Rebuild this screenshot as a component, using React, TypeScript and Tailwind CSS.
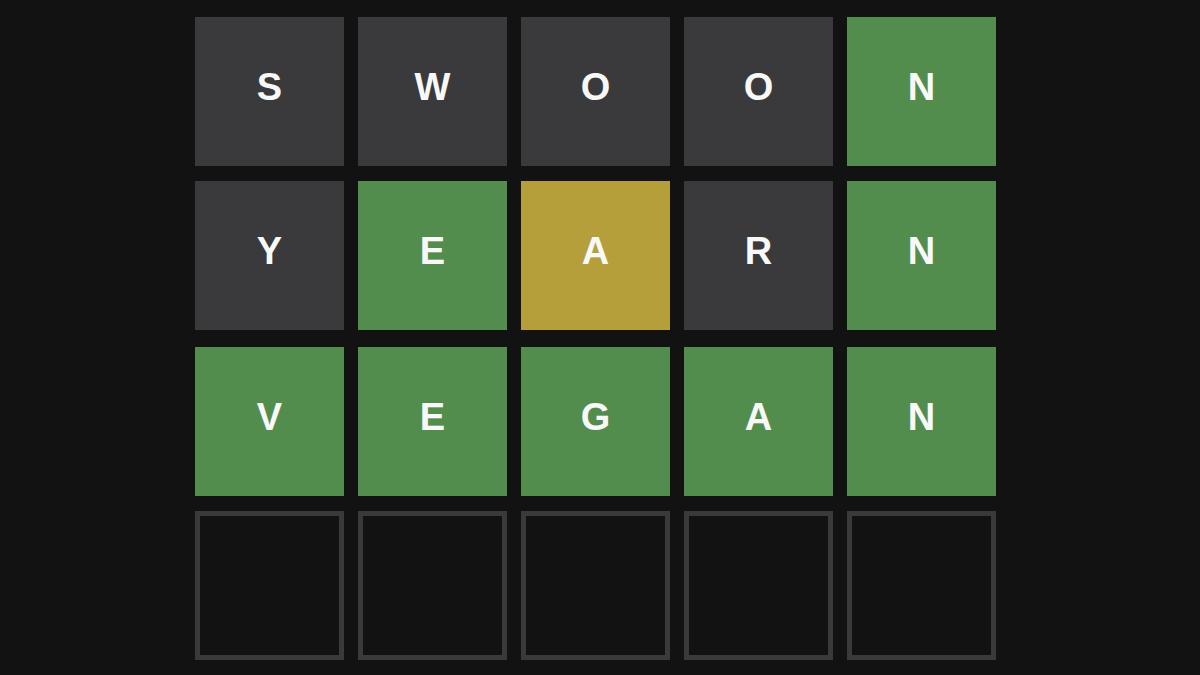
const rows: { letter: string; state: 'absent' | 'present' | 'correct' | 'empty' }[][] = [
  [
    { letter: 'S', state: 'absent' },
    { letter: 'W', state: 'absent' },
    { letter: 'O', state: 'absent' },
    { letter: 'O', state: 'absent' },
    { letter: 'N', state: 'correct' },
  ],
  [
    { letter: 'Y', state: 'absent' },
    { letter: 'E', state: 'correct' },
    { letter: 'A', state: 'present' },
    { letter: 'R', state: 'absent' },
    { letter: 'N', state: 'correct' },
  ],
  [
    { letter: 'V', state: 'correct' },
    { letter: 'E', state: 'correct' },
    { letter: 'G', state: 'correct' },
    { letter: 'A', state: 'correct' },
    { letter: 'N', state: 'correct' },
  ],
  [
    { letter: '', state: 'empty' },
    { letter: '', state: 'empty' },
    { letter: '', state: 'empty' },
    { letter: '', state: 'empty' },
    { letter: '', state: 'empty' },
  ],
];

const tileClass = {
  absent: 'bg-[#3a3a3c]',
  present: 'bg-[#b59f3b]',
  correct: 'bg-[#538d4e]',
  empty: 'border-[5px] border-[#3a3a3c]',
};

// the screenshot is scaled, so row gaps aren't quite even
const rowGap = ['', 'mt-[15px]', 'mt-[17px]', 'mt-[15px]'];

const App = () => {
  return (
    <div className="w-[1200px] h-[675px] bg-[#121213] overflow-hidden flex justify-center pt-[17px]">
      <div className="flex flex-col mr-[9px]">
        {rows.map((row, r) => (
          <div key={r} className={`flex gap-[14px] ${rowGap[r]}`}>
            {row.map((tile, i) => (
              <div
                key={i}
                className={`w-[149px] h-[149px] flex items-center justify-center pb-[9px] ${tileClass[tile.state]}`}
              >
                <span
                  className="text-[38px] font-bold text-[#f8f8f8]"
                  style={{ fontFamily: '"Liberation Sans", Arial, sans-serif' }}
                >
                  {tile.letter}
                </span>
              </div>
            ))}
          </div>
        ))}
      </div>
    </div>
  );
};

export default App;
